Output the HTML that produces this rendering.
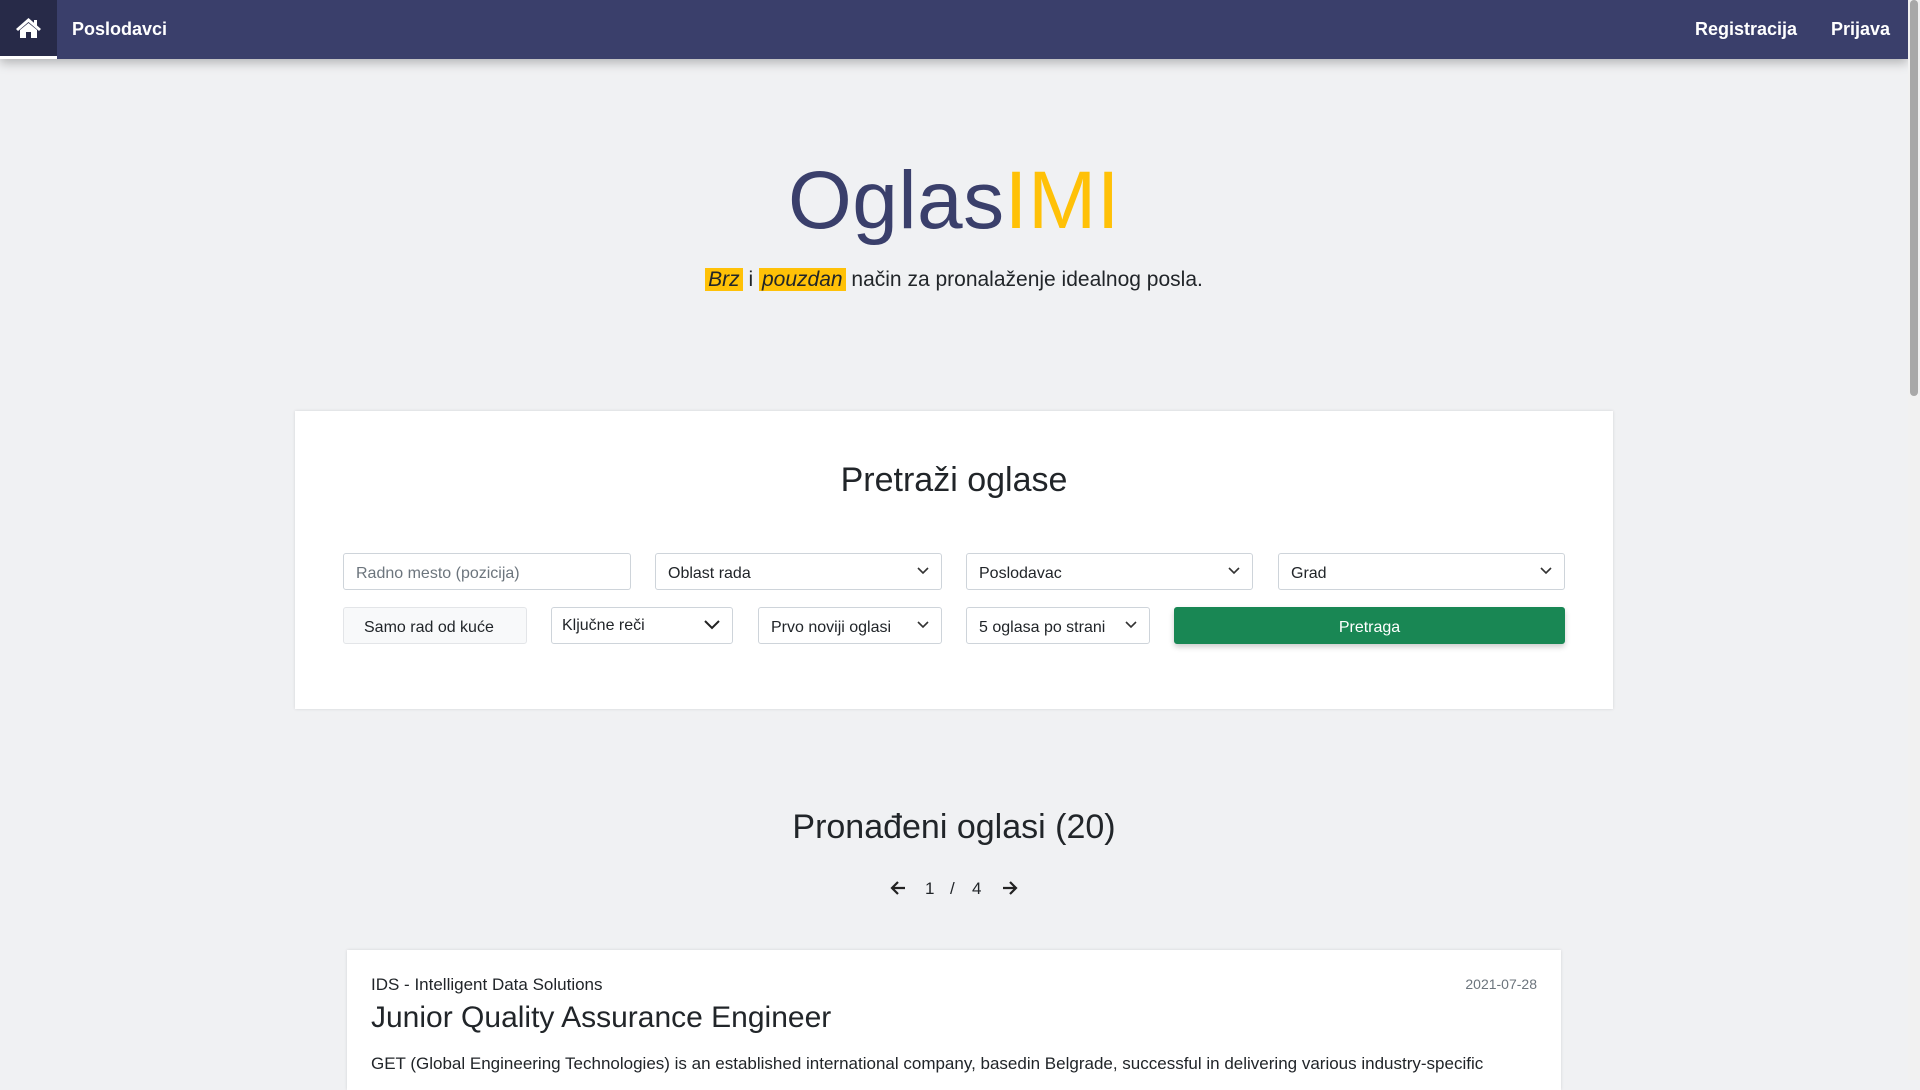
<!DOCTYPE html>
<html><head><meta charset="utf-8"><style>
*{box-sizing:border-box;margin:0;padding:0}
body{width:1920px;height:1080px;overflow:hidden;background:#f0f1f3;font-family:"Liberation Sans",sans-serif;color:#212529;position:relative}
.nav{position:absolute;left:0;top:0;width:1908px;height:59px;background:#3a3f6b;box-shadow:0 4px 10px rgba(0,0,0,.25)}
.home{position:absolute;left:0;top:0;width:57px;height:59px;background:#272a48;border-bottom:3px solid #fff}
.nav a{position:absolute;top:19px;color:#fff;font-weight:bold;font-size:18px;text-decoration:none}
.sb{position:absolute;right:0;top:0;width:12px;height:1080px;background:#f1f1f1}
.sb div{position:absolute;left:2px;top:0;width:8px;height:396px;background:#a8a8a8;border-radius:4px}
.t{position:absolute;left:0;width:1908px;text-align:center}
.card{position:absolute;left:295px;top:411px;width:1318px;height:298px;background:#fff;box-shadow:0 0 3px rgba(0,0,0,.12)}
.f{position:absolute;height:37px;border:1px solid #ced4da;border-radius:3px;background:#fff;font-size:16px;padding:11px 12px 0;color:#212529}
.f svg{position:absolute;right:12px;top:13px}
.job{position:absolute;left:347px;top:950px;width:1214px;height:140px;background:#fff;box-shadow:0 0 3px rgba(0,0,0,.12)}
.pg{position:absolute;top:879px;font-size:17px}
</style></head><body>
<div class="nav">
<div class="home"><svg style="position:absolute;left:15px;top:17px" width="27" height="22" viewBox="0 0 27 22"><path d="M13.5 1 L1 12 L3 14 L13.5 5 L24 14 L26 12 Z" fill="#fff"/><path d="M19 3h3v6l-3-2.6z" fill="#fff"/><path d="M5 13 L13.5 6 L22 13 V21 H16 V15 H11 V21 H5 Z" fill="#fff"/></svg></div>
<a style="left:72px">Poslodavci</a>
<a style="left:1695px">Registracija</a>
<a style="left:1831px">Prijava</a>
</div>
<div class="sb"><div></div></div>
<div class="t" style="top:151px;font-size:82px;line-height:100px;color:#3a3f6b;letter-spacing:0.5px">Oglas<span style="color:#ffc107">IMI</span></div>
<div class="t" style="top:267px;font-size:21px;line-height:26px"><i style="background:#ffc107;padding:0 3px">Brz</i> i <i style="background:#ffc107;padding:0 3px">pouzdan</i> način za pronalaženje idealnog posla.</div>
<div class="card"></div>
<div class="t" style="top:459px;font-size:34px;line-height:42px">Pretraži oglase</div>
<div class="f" style="left:343px;top:553px;width:288px;color:#6c757d">Radno mesto (pozicija)</div>
<div class="f" style="left:655px;top:553px;width:287px">Oblast rada<svg width="12" height="8"><path d="M1 1l5 5 5-5" stroke="#333" stroke-width="1.6" fill="none"/></svg></div>
<div class="f" style="left:966px;top:553px;width:287px">Poslodavac<svg width="12" height="8"><path d="M1 1l5 5 5-5" stroke="#333" stroke-width="1.6" fill="none"/></svg></div>
<div class="f" style="left:1278px;top:553px;width:287px">Grad<svg width="12" height="8"><path d="M1 1l5 5 5-5" stroke="#333" stroke-width="1.6" fill="none"/></svg></div>
<div class="f" style="left:343px;top:607px;width:184px;background:#f8f9fa;border-color:#e3e5e8;padding-left:20px">Samo rad od kuće</div>
<div class="f" style="left:551px;top:607px;width:182px;padding-top:9px;padding-left:10px">Ključne reči<svg width="16" height="10" style="top:12px"><path d="M1 1l7 7 7-7" stroke="#222" stroke-width="2" fill="none"/></svg></div>
<div class="f" style="left:758px;top:607px;width:184px">Prvo noviji oglasi<svg width="12" height="8"><path d="M1 1l5 5 5-5" stroke="#333" stroke-width="1.6" fill="none"/></svg></div>
<div class="f" style="left:966px;top:607px;width:184px">5 oglasa po strani<svg width="12" height="8"><path d="M1 1l5 5 5-5" stroke="#333" stroke-width="1.6" fill="none"/></svg></div>
<div class="f" style="left:1174px;top:607px;width:391px;background:#198754;border-color:#198754;color:#fff;text-align:center;box-shadow:0 3px 6px rgba(0,0,0,.2)">Pretraga</div>
<div class="t" style="top:806px;font-size:34px;line-height:42px">Pronađeni oglasi (20)</div>
<svg style="position:absolute;left:890px;top:880px" width="16" height="16"><path d="M15 8H2M8 2L2 8l6 6" stroke="#222" stroke-width="2.2" fill="none"/></svg>
<div class="pg" style="left:925px">1</div>
<div class="pg" style="left:950px">/</div>
<div class="pg" style="left:972px">4</div>
<svg style="position:absolute;left:1002px;top:880px" width="16" height="16"><path d="M1 8h13M8 2l6 6-6 6" stroke="#222" stroke-width="2.2" fill="none"/></svg>
<div class="job">
<div style="position:absolute;left:24px;top:25px;font-size:17px">IDS - Intelligent Data Solutions</div>
<div style="position:absolute;right:24px;top:26px;font-size:14px;color:#6c757d">2021-07-28</div>
<div style="position:absolute;left:24px;top:51px;font-size:30px">Junior Quality Assurance Engineer</div>
<div style="position:absolute;left:24px;top:104px;font-size:17px">GET (Global Engineering Technologies) is an established international company, basedin Belgrade, successful in delivering various industry-specific</div>
</div>
</body></html>
